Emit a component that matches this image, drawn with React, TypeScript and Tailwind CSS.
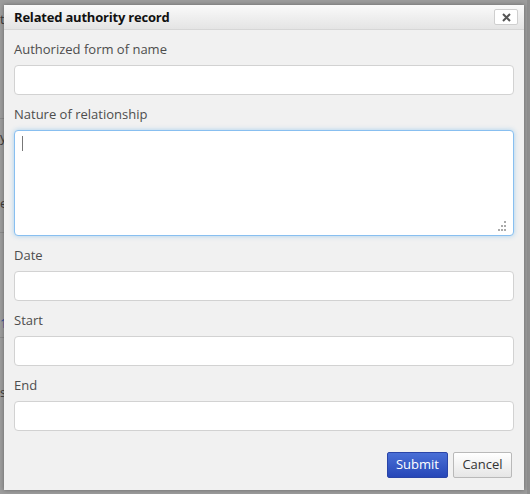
import { useState } from 'react';

const FIELDS_TOP = [{ id: 'name', label: 'Authorized form of name' }];
const FIELDS_BOTTOM = [
  { id: 'date', label: 'Date' },
  { id: 'start', label: 'Start' },
  { id: 'end', label: 'End' },
];

function Field({ label }: { label: string }) {
  return (
    <div className="flex flex-col">
      <label className="text-[13px] leading-[18px] text-[#4d4d4d] mb-[7px]">{label}</label>
      <input className="h-[30px] w-full rounded-[4px] border border-[#d2d2d2] bg-white px-2 text-[13px] outline-none" />
    </div>
  );
}

export default function App() {
  const [note, setNote] = useState('');

  return (
    <div className="relative h-[494px] w-[530px] overflow-hidden bg-[#9c9c9c] font-['Open_Sans',sans-serif]">
      {/* page behind the overlay */}
      <div className="absolute inset-0 text-[13px] text-[#3a3a3a]">
        <span className="absolute left-0 top-[10px]">t</span>
        <span className="absolute left-0 top-[128px]">y</span>
        <span className="absolute left-0 top-[194px]">e</span>
        <span className="absolute left-0 top-[314px] text-[#2a4f9a]">1</span>
        <span className="absolute left-0 top-[383px]">s</span>
        <div className="absolute left-0 top-[118px] h-px w-[4px] bg-[#8a8a8a]" />
        <div className="absolute left-0 top-[232px] h-px w-[4px] bg-[#8a8a8a]" />
        <div className="absolute left-0 top-[337px] h-px w-[4px] bg-[#8a8a8a]" />
        <div className="absolute right-0 top-0 h-full w-[3px] bg-[#8f8f8f]" />
      </div>

      {/* Dialog */}
      <div className="absolute left-[4px] top-[5px] flex h-[485px] w-[520px] flex-col bg-[#f1f1f1] shadow-[0_0_4px_rgba(0,0,0,0.35)]">
        {/* Header */}
        <div className="flex h-[25px] items-center justify-between border-b border-[#d6d6d6] bg-gradient-to-b from-[#fafafa] to-[#e4e4e4] pl-[10px] pr-[6px]">
          <span className="pt-px text-[13px] font-bold tracking-[-0.2px] text-[#111]">Related authority record</span>
          <button className="flex h-[16px] w-[24px] items-center justify-center rounded-[2px] border border-[#cfcfcf] bg-white">
            <svg width="9" height="9" viewBox="0 0 9 9" stroke="#555" strokeWidth="2">
              <path d="M1 1l7 7M8 1l-7 7" />
            </svg>
          </button>
        </div>

        {/* Body */}
        <div className="flex flex-1 flex-col px-[10px] pt-[10px]">
          {FIELDS_TOP.map((f) => (
            <Field key={f.id} label={f.label} />
          ))}

          <div className="mt-[10px] flex flex-col">
            <label className="mb-[7px] text-[13px] leading-[18px] text-[#4d4d4d]">Nature of relationship</label>
            <div className="relative">
              <textarea
                autoFocus
                value={note}
                onChange={(e) => setNote(e.target.value)}
                className="block h-[106px] w-full resize-none rounded-[4px] border border-[#88bff0] bg-white px-2 py-1 text-[13px] shadow-[0_0_5px_rgba(82,168,236,0.45)] outline-none"
              />
              <span className="absolute left-[8px] top-[6px] h-[15px] w-px bg-[#777]" />
              <svg className="absolute bottom-[4px] right-[7px]" width="11" height="11" viewBox="0 0 11 11" fill="#aaa">
                <rect x="8" y="0" width="2" height="2" />
                <rect x="5" y="4" width="2" height="2" />
                <rect x="8" y="4" width="2" height="2" />
                <rect x="2" y="8" width="2" height="2" />
                <rect x="5" y="8" width="2" height="2" />
                <rect x="8" y="8" width="2" height="2" />
              </svg>
            </div>
          </div>

          <div className="mt-[10px] flex flex-col gap-[10px]">
            {FIELDS_BOTTOM.map((f) => (
              <Field key={f.id} label={f.label} />
            ))}
          </div>

          {/* Buttons */}
          <div className="mt-[21px] flex justify-end gap-[5px] pr-[2px]">
            <button className="h-[26px] w-[61px] rounded-[2px] border border-[#2a45a8] bg-gradient-to-b from-[#4a6fd6] to-[#2747b8] text-[13px] text-white">
              Submit
            </button>
            <button className="h-[26px] w-[59px] rounded-[2px] border border-[#b9b9b9] bg-gradient-to-b from-white to-[#e6e6e6] text-[13px] text-[#333]">
              Cancel
            </button>
          </div>
        </div>
      </div>
    </div>
  );
}
